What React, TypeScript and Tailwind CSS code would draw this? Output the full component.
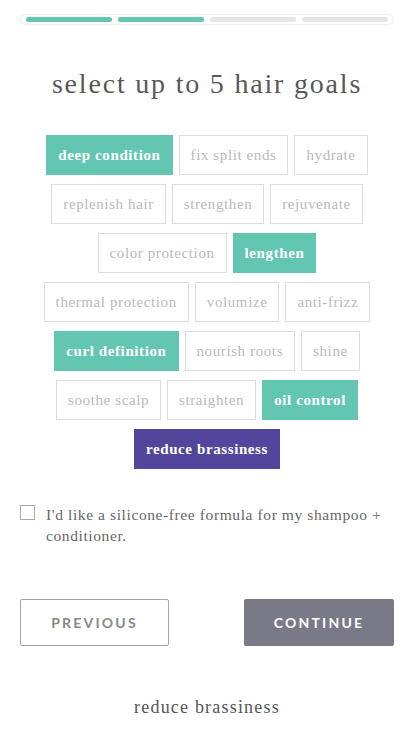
import { useState } from 'react';

const rows: string[][] = [
  ['deep condition', 'fix split ends', 'hydrate'],
  ['replenish hair', 'strengthen', 'rejuvenate'],
  ['color protection', 'lengthen'],
  ['thermal protection', 'volumize', 'anti-frizz'],
  ['curl definition', 'nourish roots', 'shine'],
  ['soothe scalp', 'straighten', 'oil control'],
  ['reduce brassiness'],
];

const picked = ['deep condition', 'lengthen', 'curl definition', 'oil control'];
const current = 'reduce brassiness';

function Chip({ label }: { label: string }) {
  const isCurrent = label === current;
  const isPicked = picked.includes(label);
  const cls = isCurrent
    ? 'border-[#52459b] bg-[#52459b] font-semibold text-white'
    : isPicked
      ? 'border-[#62c6b1] bg-[#62c6b1] font-semibold text-white'
      : 'border-[#dddddd] bg-white text-[#b9b9b9]';
  return (
    <button
      className={`h-[40px] border px-[11px] text-[15px] leading-none tracking-[0.6px] ${cls}`}
    >
      {label}
    </button>
  );
}

export default function App() {
  const [silicone, setSilicone] = useState(false);

  return (
    <div className="min-h-[736px] w-[414px] bg-white font-['Liberation_Serif',serif] text-[#555]">
      {/* progress */}
      <div className="px-5 pt-[14px]">
        <div className="grid grid-cols-4 gap-[6px] rounded-full border border-[#eeeeee] p-[2px] px-[5px]">
          <div className="h-[5px] rounded-full bg-[#62c6b1]" />
          <div className="h-[5px] rounded-full bg-[#62c6b1]" />
          <div className="h-[5px] rounded-full bg-[#e6e6e6]" />
          <div className="h-[5px] rounded-full bg-[#e6e6e6]" />
        </div>
      </div>

      <h1 className="mt-[45px] text-center text-[28px] leading-none tracking-[1.8px] text-[#585858]">
        select up to 5 hair goals
      </h1>

      <div className="mt-[37px] flex flex-col items-center gap-[9px]">
        {rows.map((row, i) => (
          <div key={i} className="flex gap-[6px]">
            {row.map((g) => (
              <Chip key={g} label={g} />
            ))}
          </div>
        ))}
      </div>

      <label className="mt-[35px] flex items-start gap-[11px] px-5 text-[15.5px] leading-[21px] tracking-[0.6px] text-[#666]">
        <input
          type="checkbox"
          checked={silicone}
          onChange={(e) => setSilicone(e.target.checked)}
          className="mt-[1px] h-[15px] w-[15px] shrink-0 appearance-none border border-[#aaa] bg-white"
        />
        <span>I'd like a silicone-free formula for my shampoo + conditioner.</span>
      </label>

      <div className="mt-[53px] flex justify-between px-5">
        <button className="h-[47px] w-[149px] rounded-[2px] border border-[#a5a5a5] font-['Lato',sans-serif] text-[14px] font-bold tracking-[2.2px] text-[#888]">
          PREVIOUS
        </button>
        <button className="h-[47px] w-[150px] rounded-[2px] bg-[#7a7987] font-['Lato',sans-serif] text-[14px] font-bold tracking-[2.2px] text-white">
          CONTINUE
        </button>
      </div>

      <p className="mt-[48px] text-center text-[18px] tracking-[1.2px] text-[#555]">reduce brassiness</p>
    </div>
  );
}
